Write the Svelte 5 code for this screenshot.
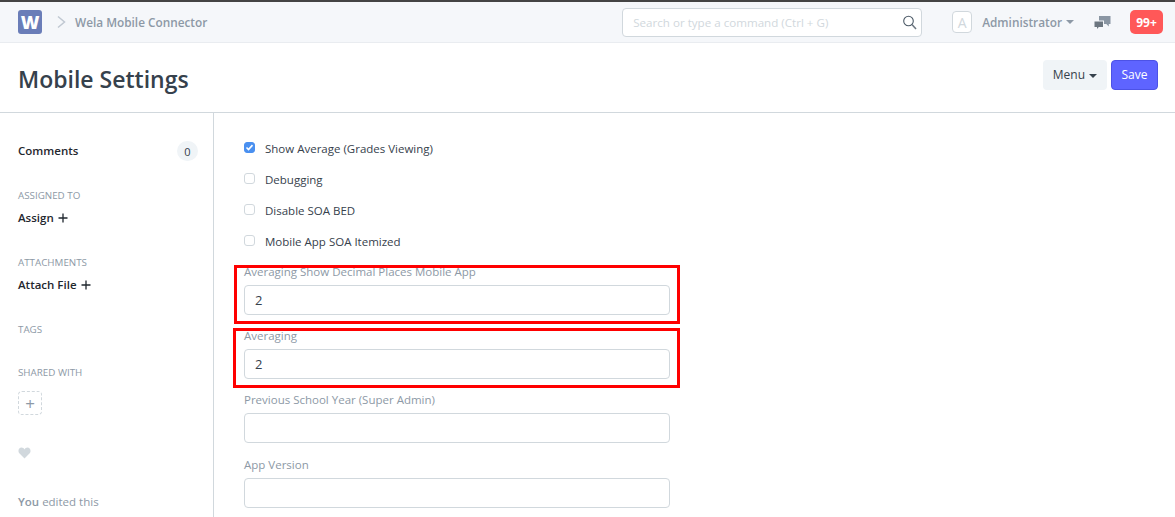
<script>
  const checks = [
    { label: 'Show Average (Grades Viewing)', on: true },
    { label: 'Debugging', on: false },
    { label: 'Disable SOA BED', on: false },
    { label: 'Mobile App SOA Itemized', on: false }
  ];
</script>

<div class="page">
  <header class="navbar">
    <div class="logo">W</div>
    <svg class="crumb" width="9" height="14" viewBox="0 0 9 14"><path d="M1 1.500 7.500 7 1 12.500" fill="none" stroke="#c0c8d2" stroke-width="1.500"/></svg>
    <span class="crumb-text">Wela Mobile Connector</span>
    <div class="search">
      <span>Search or type a command (Ctrl + G)</span>
      <svg width="15" height="15" viewBox="0 0 15 15"><circle cx="6.500" cy="6" r="4.800" fill="none" stroke="#4c5a67" stroke-width="1.100"/><path d="m10 9.500 4 4.500" stroke="#6c7680" stroke-width="1.500"/></svg>
    </div>
    <div class="avatar">A</div>
    <span class="user">Administrator</span>
    <span class="caret"></span>
    <svg class="chat" width="17" height="15" viewBox="0 0 17 15"><path d="M5 1h11.500v8h-1.700v2.500L12.300 9H10V5.500H5z" fill="#8a96a3"/><path d="M.5 6.500H9V12H4.800L3 14v-2H.5z" fill="#6c7680"/></svg>
    <div class="badge">99+</div>
  </header>

  <div class="title-bar">
    <h1>Mobile Settings</h1>
    <div class="actions">
      <button class="menu">Menu <span class="caret dark"></span></button>
      <button class="save">Save</button>
    </div>
  </div>

  <div class="body">
    <aside class="side">
      <div class="comments"><b>Comments</b><span class="count">0</span></div>
      <div class="side-label first">ASSIGNED TO</div>
      <div class="side-link">Assign
        <svg width="10" height="10" viewBox="0 0 10 10"><path d="M5 .5v9M.5 5h9" stroke="#1f272e" stroke-width="1.300"/></svg>
      </div>
      <div class="side-label second">ATTACHMENTS</div>
      <div class="side-link">Attach File
        <svg width="10" height="10" viewBox="0 0 10 10"><path d="M5 .5v9M.5 5h9" stroke="#1f272e" stroke-width="1.300"/></svg>
      </div>
      <div class="side-label third">TAGS</div>
      <div class="side-label fourth">SHARED WITH</div>
      <div class="share">+</div>
      <svg class="heart" width="13" height="12" viewBox="0 0 13 12"><path d="M6.500 11.500 1.300 6.200C-.6 3.800 1 .6 3.500.6c1.300 0 2.300.7 3 1.800C7.200 1.300 8.200.6 9.500.6c2.500 0 4.100 3.200 2.200 5.600z" fill="#d1d8dd"/></svg>
      <div class="edit"><b>You</b> edited this<br />a few seconds ago</div>
    </aside>

    <main class="form">
      <div class="checks">
        {#each checks as c}
          <div class="check">
            <span class="box" class:on={c.on}>
              {#if c.on}<svg width="11" height="11" viewBox="0 0 11 11"><path d="m2.500 5.500 2 2 4-4.400" fill="none" stroke="#fff" stroke-width="1.600"/></svg>{/if}
            </span>
            <span>{c.label}</span>
          </div>
        {/each}
      </div>

      <div class="field hl first-hl">
        <label for="f1">Averaging Show Decimal Places Mobile App</label>
        <input id="f1" value="2" />
      </div>
      <div class="field hl second-hl">
        <label for="f2">Averaging</label>
        <input id="f2" value="2" />
      </div>
      <div class="field">
        <label for="f3">Previous School Year (Super Admin)</label>
        <input id="f3" />
      </div>
      <div class="field last">
        <label for="f4">App Version</label>
        <input id="f4" />
      </div>
    </main>
  </div>
</div>

<style>
  :global(body) {
    margin: 0;
    overflow: hidden;
    background: #fff;
  }
  .page {
    height: 517px;
    overflow: hidden;
    font-family: "Open Sans", "Liberation Sans", sans-serif;
    font-size: 11.500px;
    color: #1f272e;
    display: flex;
    flex-direction: column;
  }
  .navbar {
    height: 40px;
    flex: none;
    display: flex;
    align-items: center;
    padding-left: 18px;
    background: #f5f7fa;
    border-top: 2px solid #444;
    border-bottom: 1px solid #e9ecf0;
  }
  .logo {
    width: 24px;
    height: 24px;
    border-radius: 3px;
    background: #6a7db8;
    color: #fff;
    font-weight: 800;
    font-size: 18px;
    display: flex;
    align-items: center;
    justify-content: center;
  }
  .crumb {
    margin-left: 15px;
  }
  .crumb-text {
    margin-left: 9px;
    font-weight: 600;
    font-size: 11.800px;
    color: #8d99a6;
  }
  .search {
    margin-left: auto;
    width: 300px;
    height: 29px;
    box-sizing: border-box;
    border: 1px solid #d1d8dd;
    border-radius: 4px;
    background: #fff;
    display: flex;
    align-items: center;
    justify-content: space-between;
    padding: 0 4px 0 10px;
    font-size: 11.600px;
    color: #d1d8dd;
  }
  .avatar {
    margin-left: 30px;
    width: 20px;
    height: 22px;
    box-sizing: border-box;
    border: 1px solid #d1d8dd;
    border-radius: 4px;
    background: #fff;
    color: #d1d8dd;
    font-size: 14px;
    display: flex;
    align-items: center;
    justify-content: center;
  }
  .user {
    margin-left: 10px;
    font-weight: 600;
    font-size: 11.800px;
    color: #8d99a6;
  }
  .caret {
    margin-left: 4px;
    width: 0;
    height: 0;
    border-left: 4px solid transparent;
    border-right: 4px solid transparent;
    border-top: 4px solid #8d99a6;
    display: inline-block;
    vertical-align: middle;
  }
  .caret.dark {
    border-top-color: #36414c;
    margin-left: 1px;
  }
  .chat {
    margin-left: 20px;
  }
  .badge {
    margin: 0 12px 0 19px;
    width: 33px;
    height: 24px;
    border-radius: 5px;
    background: #ff5858;
    color: #fff;
    font-weight: 700;
    font-size: 12px;
    display: flex;
    align-items: center;
    justify-content: center;
  }
  .title-bar {
    height: 69px;
    flex: none;
    display: flex;
    align-items: center;
    justify-content: space-between;
    padding: 0 17px 0 18px;
    border-bottom: 1px solid #d1d8dd;
  }
  h1 {
    margin: 2px 0 0;
    font-size: 23px;
    font-weight: 600;
    color: #36414c;
  }
  .actions {
    display: flex;
    gap: 4px;
    margin-bottom: 6px;
  }
  button {
    height: 30px;
    border: 0;
    border-radius: 4px;
    font: inherit;
    font-size: 12px;
  }
  .menu {
    width: 64px;
    background: #f0f4f7;
    color: #36414c;
  }
  .save {
    width: 47px;
    background: #5e64ff;
    color: #fff;
    border: 1px solid #4c52e6;
  }
  .body {
    flex: 1;
    display: flex;
    min-height: 0;
  }
  .side {
    width: 214px;
    flex: none;
    box-sizing: border-box;
    padding: 28px 15px 0 18px;
    border-right: 1px solid #d1d8dd;
  }
  .comments {
    display: flex;
    align-items: center;
    justify-content: space-between;
    height: 18px;
  }
  b {
    font-weight: 600;
  }
  .count {
    width: 21px;
    height: 20px;
    margin-top: 2px;
    border-radius: 10px;
    background: #f0f4f7;
    color: #36414c;
    font-size: 11px;
    display: flex;
    align-items: center;
    justify-content: center;
  }
  .side-label {
    font-size: 9.800px;
    color: #8d99a6;
    line-height: 12px;
  }
  .first { margin-top: 31px; }
  .second { margin-top: 30px; }
  .third { margin-top: 30px; }
  .fourth { margin-top: 31px; }
  .side-link {
    margin-top: 7px;
    font-weight: 600;
    line-height: 18px;
    height: 18px;
  }
  .side-link svg {
    margin-left: 1px;
    vertical-align: -1px;
  }
  .share {
    margin-top: 12px;
    width: 24px;
    height: 24px;
    box-sizing: border-box;
    border: 1px dashed #d1d8dd;
    border-radius: 4px;
    color: #8d99a6;
    font-size: 17px;
    display: flex;
    align-items: center;
    justify-content: center;
  }
  .heart {
    display: block;
    margin-top: 32px;
  }
  .edit {
    margin-top: 33px;
    line-height: 20px;
    color: #8d99a6;
  }
  .form {
    padding: 20px 0 0 30px;
    width: 426px;
  }
  .checks {
    margin-bottom: 7px;
  }
  .check {
    height: 31px;
    display: flex;
    align-items: center;
    gap: 10px;
    color: #36414c;
  }
  .box {
    margin-top: -2px;
    width: 9px;
    height: 9px;
    border: 1px solid #d1d8dd;
    border-radius: 3px;
    display: flex;
  }
  .box.on {
    background: #4a90f0;
    border-color: #4a90f0;
  }
  .box svg {
    margin: -1px;
  }
  .field {
    position: relative;
    display: flex;
    flex-direction: column;
    margin-bottom: 13px;
  }
  .field.last {
    margin-top: 14px;
  }
  .field label {
    color: #8d99a6;
    line-height: 16px;
    margin-bottom: 5px;
  }
  .field input {
    height: 30px;
    box-sizing: border-box;
    border: 1px solid #d1d8dd;
    border-radius: 4px;
    padding: 0 10px;
    font: inherit;
    font-size: 13px;
    color: #36414c;
    outline: 0;
  }
  .hl::after {
    content: "";
    position: absolute;
    right: -10px;
    bottom: -9px;
    border: 3px solid #f00;
    pointer-events: none;
  }
  .first-hl::after {
    left: -10px;
    top: 1px;
  }
  .second-hl::after {
    left: -11px;
    top: 0;
  }
</style>
